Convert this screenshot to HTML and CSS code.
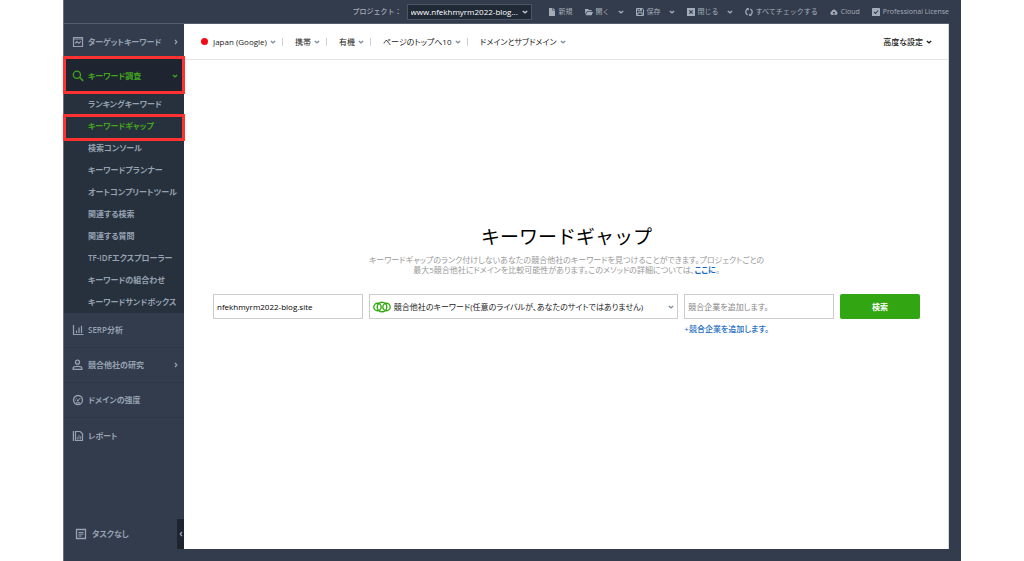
FILE: index.html
```html
<!DOCTYPE html>
<html lang="ja">
<head>
<meta charset="utf-8">
<title>キーワードギャップ</title>
<meta name="viewport" content="width=device-width, initial-scale=1">
<link rel="stylesheet" href="styles.css">
</head>
<body>
<svg class="sprite" aria-hidden="true">
  <symbol id="down" viewBox="0 0 6 4"><path d="M.8 1L3 2.800 5.200 1" fill="none" stroke="currentColor" stroke-width="1.300"/></symbol>
  <symbol id="right" viewBox="0 0 4 6"><path d="M1 .8L2.800 3 1 5.200" fill="none" stroke="currentColor" stroke-width="1.300"/></symbol>
</svg>
<div class="window">
  <header class="topbar">
    <label class="project-label" for="project">プロジェクト：</label>
    <span class="picker project">
      <select id="project"><option>www.nfekhmyrm2022-blog...</option></select>
      <svg class="chev"><use href="#down"/></svg>
    </span>
    <div class="actions">
      <button class="action" type="button"><svg class="ic" viewBox="0 0 8 8"><path d="M1 0h3.400v2.600H7V8H1zM5 0l2 2H5z" fill="currentColor"/></svg>新規</button>
      <button class="action" type="button"><svg class="ic" viewBox="0 0 8 8"><path d="M0 1h3l1 1h2.600v1.200H2L.2 6.200zM2.300 3.900H8L6.600 7.300H.6z" fill="currentColor"/></svg>開く<svg class="chev far"><use href="#down"/></svg></button>
      <button class="action" type="button"><svg class="ic" viewBox="0 0 8 8"><path d="M.5.500h6l1 1v6h-7zM2 .5v2.300h3.600V.5M1.800 7.500V4.800h4.400v2.700" fill="none" stroke="currentColor"/><path d="M4 1h1v1.500H4z" fill="currentColor"/></svg>保存<svg class="chev far"><use href="#down"/></svg></button>
      <button class="action" type="button"><svg class="ic" viewBox="0 0 8 8"><path d="M0 0h8v8H0z" fill="currentColor"/><path d="M2.300 2.300l3.400 3.400M5.700 2.300L2.300 5.700" stroke="#333c4c" stroke-width="1.200"/></svg>閉じる<svg class="chev far"><use href="#down"/></svg></button>
      <button class="action" type="button"><svg class="ic" viewBox="0 0 8 8"><path d="M2.600 6.800C.2 5.600.2 2.300 2.600 1.200M5.400 1.200c2.400 1.100 2.400 4.400 0 5.600" fill="none" stroke="currentColor" stroke-width="1.300"/><path d="M1.200 0h2.600v2.800zM6.800 8H4.200V5.200z" fill="currentColor"/></svg>すべてチェックする</button>
      <button class="action" type="button"><svg class="ic" viewBox="0 0 8 8"><path d="M2 7a2 2 0 0 1-.3-3.800 2.400 2.400 0 0 1 4.600 0A2 2 0 0 1 6 7z" fill="currentColor"/><path d="M4 7V4M2.700 5.200L4 3.900l1.300 1.300" fill="none" stroke="#333c4c" stroke-width=".9"/></svg>Cloud</button>
      <button class="action" type="button"><svg class="ic" viewBox="0 0 8 8"><rect width="8" height="8" rx=".6" fill="currentColor"/><path d="M2 3.900l1.500 1.500L6.200 2.500" fill="none" stroke="#333c4c" stroke-width="1.100"/></svg>Professional License</button>
    </div>
  </header>

  <div class="body">
    <nav class="sidebar">
      <a class="item" href="#"><svg class="nav-ic" viewBox="0 0 12 12"><path d="M1.500 1.500h9v9h-9z" fill="none" stroke="currentColor" stroke-width="1.200"/><path d="M2 3h8M3 7.400l1.800-1.800 1.900 1.600 2.300-1.900" fill="none" stroke="currentColor" stroke-width="1.100"/></svg>ターゲットキーワード<svg class="chev side"><use href="#right"/></svg></a>
      <a class="item active marked" href="#"><svg class="nav-ic" viewBox="0 0 12 12"><circle cx="4.900" cy="4.700" r="3.600" fill="none" stroke="currentColor" stroke-width="1.300"/><path d="M7.500 7.300l3.700 3.600" stroke="currentColor" stroke-width="1.500"/></svg>キーワード調査<svg class="chev side"><use href="#down"/></svg></a>
      <div class="sub">
        <a href="#">ランキングキーワード</a>
        <a class="current marked" href="#">キーワードギャップ</a>
        <a href="#">検索コンソール</a>
        <a href="#">キーワードプランナー</a>
        <a href="#">オートコンプリートツール</a>
        <a href="#">関連する検索</a>
        <a href="#">関連する質問</a>
        <a href="#">TF-IDFエクスプローラー</a>
        <a href="#">キーワードの組合わせ</a>
        <a href="#">キーワードサンドボックス</a>
      </div>
      <a class="item ruled" href="#"><svg class="nav-ic" viewBox="0 0 12 12"><path d="M1.500 1v9.500h10M4.500 9V6.500M7 9V3.500M9.500 9V1.800" fill="none" stroke="currentColor" stroke-width="1.200"/></svg>SERP分析</a>
      <a class="item ruled" href="#"><svg class="nav-ic" viewBox="0 0 12 12"><circle cx="5.500" cy="3.200" r="2" fill="none" stroke="currentColor" stroke-width="1.300"/><path d="M1.200 10.400V9C1.200 7.600 2.700 7.300 5.500 7.300s4.300.3 4.300 1.700v1.400z" fill="none" stroke="currentColor" stroke-width="1.300"/></svg>競合他社の研究<svg class="chev side"><use href="#right"/></svg></a>
      <a class="item ruled" href="#"><svg class="nav-ic" viewBox="0 0 12 12"><circle cx="6" cy="6" r="4.500" fill="none" stroke="currentColor" stroke-width="1.300"/><circle cx="5.800" cy="6.600" r="1" fill="currentColor"/><path d="M5.800 6.600l2.600-2.600M3 6h1M3.900 3.900l.7.700M4 8.800h4" stroke="currentColor"/></svg>ドメインの強度</a>
      <a class="item" href="#"><svg class="nav-ic" viewBox="0 0 12 12"><path d="M3.500 1.500h4.700l2.300 2.300v6.700h-7zM1.400 1v10" fill="none" stroke="currentColor" stroke-width="1.200"/><path d="M5.300 9.500V7M7 9.500V5M8.700 9.500V6" stroke="currentColor" stroke-width=".8"/></svg>レポート</a>
      <div class="tasks">
        <svg class="nav-ic" viewBox="0 0 12 12"><path d="M1.500 1.500h9v9h-9z" fill="none" stroke="currentColor" stroke-width="1.300"/><path d="M3.500 4.500h5M3.500 6.200h5M3.500 8h3" stroke="currentColor"/></svg>タスクなし
        <button class="collapse" type="button" aria-label="サイドバーを閉じる"><svg class="chev flip"><use href="#right"/></svg></button>
      </div>
    </nav>

    <main class="content">
      <div class="filters">
        <span class="flag"></span>
        <span class="picker"><select aria-label="検索エンジン"><option>Japan (Google)</option></select><svg class="chev"><use href="#down"/></svg></span>
        <span class="picker"><select aria-label="デバイス"><option>携帯</option></select><svg class="chev"><use href="#down"/></svg></span>
        <span class="picker"><select aria-label="結果の種類"><option>有機</option></select><svg class="chev"><use href="#down"/></svg></span>
        <span class="picker"><select aria-label="順位"><option>ページのトップへ10</option></select><svg class="chev"><use href="#down"/></svg></span>
        <span class="picker"><select aria-label="範囲"><option>ドメインとサブドメイン</option></select><svg class="chev"><use href="#down"/></svg></span>
        <button class="advanced" type="button">高度な設定<svg class="chev"><use href="#down"/></svg></button>
      </div>

      <section class="hero">
        <h1>キーワードギャップ</h1>
        <p>キーワードギャップのランク付けしないあなたの競合他社のキーワードを見つけることができます。プロジェクトごとの<br>最大5競合他社にドメインを比較可能性があります。このメソッドの詳細については、<a href="#">ここに</a>。</p>
        <form class="search">
          <input class="field domain" type="text" aria-label="ドメイン" value="nfekhmyrm2022-blog.site">
          <span class="picker method">
            <svg class="rings" viewBox="0 0 18 12"><g fill="none" stroke="#35a80f" stroke-width="1.400"><circle cx="4.500" cy="6" r="3.700"/><circle cx="13.500" cy="6" r="3.700"/><circle cx="9" cy="6" r="4.800"/></g></svg>
            <select class="field" aria-label="比較方法"><option>競合他社のキーワード(任意のライバルが、あなたのサイトではありません)</option></select>
            <svg class="chev"><use href="#down"/></svg>
          </span>
          <div class="rivals">
            <input class="field" type="text" aria-label="競合企業" placeholder="競合企業を追加します。">
            <a href="#">+競合企業を追加します。</a>
          </div>
          <button class="submit" type="button">検索</button>
        </form>
      </section>
    </main>
  </div>
</div>
</body>
</html>
```
FILE: styles.css
```css
* { box-sizing: border-box; }

body {
  margin: 0;
  background: #fff;
  color: #222;
  font: 8px/12px "Open Sans", "Noto Sans CJK JP", sans-serif;
  font-feature-settings: "palt";
}

a { color: inherit; text-decoration: none; }

button, select, input {
  margin: 0;
  padding: 0;
  border: 0;
  background: none;
  color: inherit;
  font: inherit;
  font-feature-settings: inherit;
}

select { appearance: none; }

.sprite { position: absolute; width: 0; height: 0; }

.chev { flex: none; width: 6px; height: 4px; }

.window {
  display: flex;
  flex-direction: column;
  min-height: 100vh;
  margin: 0 63px;
  padding: 0 12px 12px 0;
  border-left: 1px solid #69717e;
  background: #333c4c;
}

.topbar {
  display: flex;
  align-items: center;
  justify-content: flex-end;
  height: 24px;
  border-bottom: 1px solid #555e6d;
  color: #a3adba;
  white-space: nowrap;
}

.project-label { margin-right: 5px; font-size: 7px; font-weight: 500; font-feature-settings: normal; }

.picker { display: inline-flex; align-items: center; gap: 3px; }
.picker .chev { color: #7d8ea0; pointer-events: none; }

.project {
  width: 125px;
  height: 16px;
  padding: 0 3px;
  border: 1px solid #4a5565;
  background: #202936;
  color: #fff;
}
.project { gap: 1px; }
.project select { flex: 1; min-width: 0; }
.project .chev { color: #c5ccd5; }

.actions { display: flex; gap: 12px; margin-left: 16px; font-size: 7px; }
.action { display: flex; align-items: center; gap: 3px; font-feature-settings: normal; }
.ic { width: 8px; height: 8px; }
.far { margin-left: 5px; }

.body { display: flex; flex: 1; }

.sidebar {
  display: flex;
  flex-direction: column;
  flex: none;
  width: 120px;
  color: #96a2b2;
  font-weight: 600;
}

.item {
  display: flex;
  align-items: center;
  gap: 4px;
  height: 35px;
  padding: 0 6px 0 8px;
  white-space: nowrap;
}
.ruled { border-bottom: 1px solid #2e3747; }
.nav-ic { flex: none; width: 12px; height: 12px; }
.side { margin-left: auto; }
.side:has([href="#right"]), .flip { width: 4px; height: 6px; }
.flip { transform: rotate(180deg); }

.active { height: 33px; background: #1e2430; color: #43a51c; }

.sub { display: flex; flex-direction: column; padding-top: 1px; background: #27313d; }
.sub a { height: 22px; padding-left: 24px; line-height: 22px; white-space: nowrap; }
.sub .current { color: #43a51c; }

.marked { position: relative; }
.marked::after {
  content: "";
  position: absolute;
  inset: -3px -1px -2px;
  border: 3px solid #ff3131;
  pointer-events: none;
}
.current.marked::after { inset: -1px -1px -4px; }

.tasks {
  display: flex;
  align-items: center;
  gap: 5px;
  height: 30px;
  margin-top: auto;
  padding-left: 11px;
}
.collapse {
  display: flex;
  align-items: center;
  justify-content: center;
  width: 7px;
  height: 30px;
  margin-left: auto;
  background: #1e2430;
}

.content { flex: 1; min-width: 0; background: #fff; border-right: 1px solid #d5d8dc; }

.filters {
  display: flex;
  align-items: center;
  height: 36px;
  padding: 0 16px 0 17px;
  border-bottom: 1px solid #e4e4e4;
}
.flag { width: 7px; height: 7px; margin-right: 5px; border-radius: 50%; background: #f40b15; }
.filters .picker + .picker::before {
  content: "";
  width: 1px;
  height: 8px;
  margin: 0 9px 0 6px;
  background: #d0d0d0;
}
.advanced { display: flex; align-items: center; gap: 3px; margin-left: auto; font-weight: 500; }

.hero { padding: 164px 28px 0 29px; text-align: center; }

h1 {
  margin: 0;
  color: #000;
  font-size: 19px;
  font-weight: 400;
  font-feature-settings: normal;
  line-height: 26px;
}

p { margin: 5px 0 19px; color: #999; line-height: 10px; }
p a { color: #1a6bc0; font-weight: 600; }

.search {
  display: grid;
  grid-template-columns: 15fr 31fr 15fr 8fr;
  align-items: start;
  gap: 6px;
  text-align: left;
}

.field {
  width: 100%;
  min-width: 0;
  height: 25px;
  padding: 0 3px;
  border: 1px solid #ccc;
  background: #fff;
}
.domain { color: #000; font-weight: 500; }
.method { position: relative; min-width: 0; }
.method .field { padding: 0 12px 0 24px; }
.method .rings { position: absolute; left: 4px; width: 18px; height: 12px; }
.method .chev { position: absolute; right: 4px; }
.rivals { display: flex; flex-direction: column; gap: 4px; min-width: 0; }
.rivals a { color: #1a6bc0; font-weight: 500; }
.rivals ::placeholder { color: #888; }

.submit {
  height: 25px;
  border-radius: 2px;
  background: #32a512;
  color: #fff;
  font-weight: 700;
  text-align: center;
}
```
